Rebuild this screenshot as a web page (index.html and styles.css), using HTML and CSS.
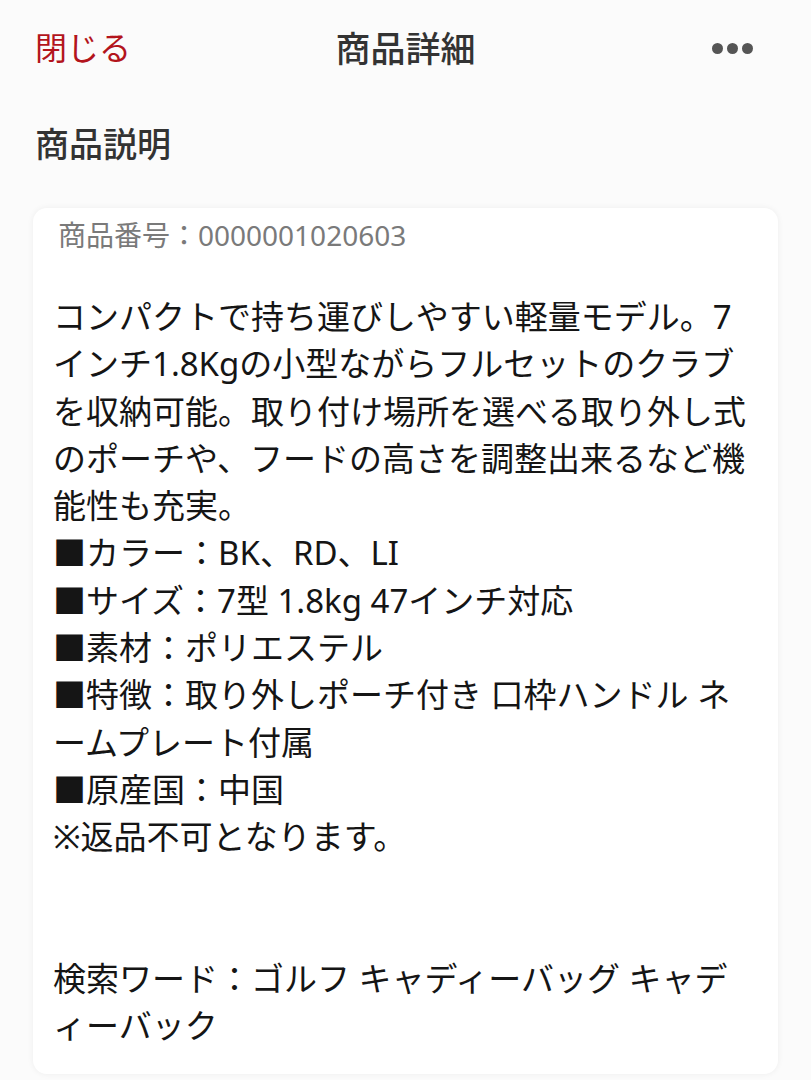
FILE: index.html
```html
<!DOCTYPE html>
<html lang="ja">
<head>
<meta charset="utf-8">
<title>商品詳細</title>
<link rel="stylesheet" href="styles.css">
</head>
<body>
<header class="topbar">
  <a class="close">閉じる</a>
  <h1 class="title">商品詳細</h1>
  <div class="more" aria-label="more"><span></span><span></span><span></span></div>
</header>
<main class="content">
  <h2 class="section-title">商品説明</h2>
  <section class="card">
    <div class="code">商品番号：0000001020603</div>
    <p class="desc">コンパクトで持ち運びしやすい軽量モデル。7インチ1.8Kgの小型ながらフルセットのクラブを収納可能。取り付け場所を選べる取り外し式のポーチや、フードの高さを調整出来るなど機能性も充実。<br>■カラー：BK、RD、LI<br>■サイズ：7型 1.8kg 47インチ対応<br>■素材：ポリエステル<br>■特徴：取り外しポーチ付き 口枠ハンドル ネームプレート付属<br>■原産国：中国<br>※返品不可となります。<br><br><br>検索ワード：ゴルフ キャディーバッグ キャディーバック</p>
  </section>
</main>
</body>
</html>
```

FILE: styles.css
```css
* { box-sizing: border-box; }
html, body {
  margin: 0;
  padding: 0;
}
body {
  width: 811px;
  height: 1080px;
  overflow: hidden;
  background: #fbfbfb;
  font-family: "Noto Sans", "Noto Sans CJK JP", sans-serif;
  color: #1a1a1a;
}
.topbar {
  position: relative;
  height: 98px;
  display: flex;
  align-items: center;
  justify-content: space-between;
  padding: 0 58px 0 35px;
}
.close {
  color: #b3141c;
  font-size: 32px;
  line-height: 40px;
  margin-top: -2px;
}
.title {
  position: absolute;
  left: 0;
  right: 0;
  top: 29px;
  margin: 0;
  text-align: center;
  font-size: 35px;
  line-height: 40px;
  font-weight: 500;
  color: #333;
  pointer-events: none;
}
.more {
  display: flex;
  gap: 4px;
  margin-top: -2px;
}
.more span {
  width: 11px;
  height: 11px;
  border-radius: 50%;
  background: #555;
}
.content {
  padding: 0 33px;
}
.section-title {
  margin: 0;
  padding: 25px 0 0 2px;
  height: 110px;
  font-size: 34px;
  line-height: 42px;
  font-weight: 500;
  color: #333;
}
.card {
  background: #fff;
  border-radius: 14px;
  box-shadow: 0 0 6px rgba(0, 0, 0, 0.06);
  padding: 10px 20px 24px 20px;
}
.code {
  padding-left: 5px;
  font-size: 28px;
  line-height: 34px;
  color: #7a7a7a;
}
.desc {
  margin: 41px 0 0 0;
  font-size: 33px;
  line-height: 47.3px;
  color: #151515;
  line-break: loose;
}
```
